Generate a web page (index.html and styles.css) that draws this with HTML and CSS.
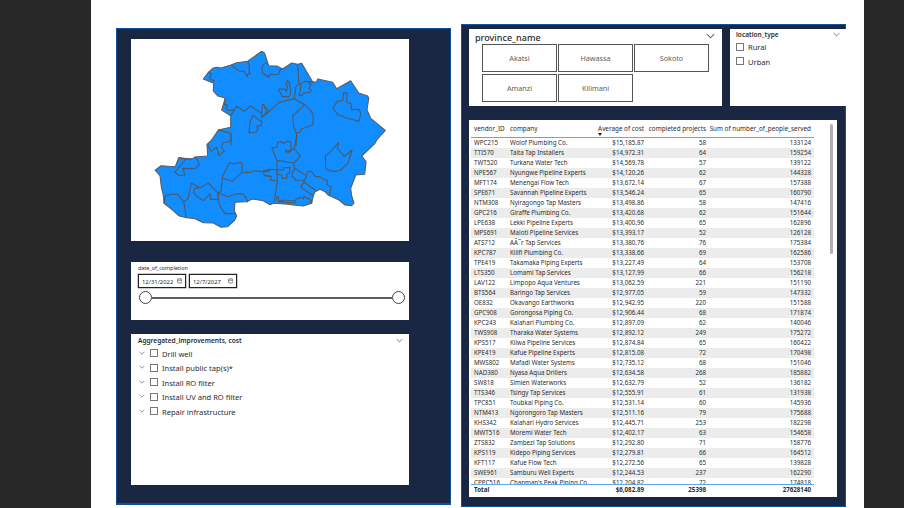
FILE: index.html
```html
<!DOCTYPE html>
<html lang="en">
<head>
<meta charset="utf-8">
<title>Water project dashboard</title>
<link rel="stylesheet" href="styles.css">
</head>
<body>
<main class="page">
  <section class="panel panel-left">
    <div class="card map-card">
      <svg class="map" viewBox="131 39 278 202">
        <path class="land" d="M203.3 79L209 71.7 213.3 68 217 67.3 221 68 231 65 236.7 62.7 247.7 61.3 261.7 51.3 264.5 53 268.7 65.7 276.7 66 282.7 69 291.7 63 297.7 64.3 301.7 63.3 312.7 82 316.7 81.7 317.7 79 332.7 82.3 336.7 88.7 350.7 80.7 358.7 93 367.7 96 368.7 98.3 367 110 370.7 118.3 385.3 130.3 376.7 140 375 143.3 361.7 156 366 161.7 364.7 174.3 355.7 175 350.7 188.3 351.7 196 354 203 351.7 205.7 345 205 339 200 328.3 195 325 191.7 320 189.3 315 191.7 313.3 195.7 311.7 203.3 303.3 206 293.3 205 285 204 273.3 203.3 270 204.7 263.3 200.7 252.3 199 246.7 201.7 235 202.3 234.3 211 236.7 216 234.3 220.7 227.7 226.7 221 227.3 213.3 223 203.3 222.7 195 218.7 186.7 217.7 179.3 216 171.7 209.3 164 203.3 163.3 195 161.3 186.7 160 175.7 155.3 170.3 161 165.7 175.3 166.7 178.7 157.7 192.3 159 195 157 207.7 156 207 144.3 211.7 140 218.3 130 230.7 127.3 230.7 115.7 221.7 110 225.3 98 217.7 96 213.3 91 213.7 83.3Z"/>
        <g class="border" transform="translate(145 40) scale(.33333)">
          <path d="M192 97l7 5-2 8-4 2 4 7 11 2-6 6"/>
          <path d="M258 75l25 18 15 2 8 15 2-7 8-2-5-10 3-12-6-15"/>
          <path d="M368 68l-12 4-5 12 1 15 18 11 5-3"/>
          <path d="M241 174l-2 22 4-3 5 5-6 8 8 6 17-3"/>
          <path d="M257 227l18-28 22 15 20-16 33 22 0 13 25-20M350 220l2-26 5 0 3 12 5 2-2 12"/>
          <path d="M323 226l28 20-3 11-13 2 4 8-6 9-21 3 3-30z"/>
          <path d="M220 270l38 10 0 35"/>
        </g>
        <g class="border" transform="translate(265 40) scale(.33333)">
          <path d="M-5 101l6 4 10 6 5-9 15 3 13-4 0-10 9-4"/>
          <path d="M98 73l4 60-9 6-5 36M-5 226l35-27 10-11 48-12 31 18-36 34 3 30 7 20 11-1 7-11 32-11 2-28-6-13-20-21M95 278l-2 40"/>
          <path d="M66 121l8 8 3 32-5 9-20 0-11-22 18-1 5 8 4-19-5-3z"/>
          <path d="M143 126l-22-2-16 8 3 10-6 25 9 0 5-8 18-2 6-5-9-8 8-10-9-6 15-3"/>
          <path d="M236 158l10 1-1 27 13 5 1 18 24-1 4 14-5 22-36-10-28-10-14-20 13-21 16-1z"/>
          <path d="M-1 202l7 3-1 15"/>
        </g>
        <g class="border" transform="translate(145 135) scale(.33333)">
          <path d="M188 28l10 21 3-2 14-10 7 25 16-14-9-12 5-13 15-2 9-6-1-18"/>
          <path d="M142 72l-19 0-34 40 13 9 18-1-7-20 37 1 14-12-12-23M101 68l23 5"/>
          <path d="M57 205l5-23 20-5 18 2 16 22 8 47M116 201l13-10 10-47 26 14 25-14 30 32 8-8 5-45 21-40 15 4 17-5 6 5-1 25-29 27-32-11M295 112l21 0 12-5 16 3 31-5"/>
          <path d="M165 158l-16 2-3 13 9 11 21 13 19-21 2 17 23 0 0-20 27 12 25-8 20-1 12 13 3 13"/>
          <path d="M220 193l5 20 15 23 32 0"/>
          <path d="M218 172l3 22M375 109l-20 2 3 10 17 3"/>
        </g>
        <g class="border" transform="translate(265 135) scale(.33333)">
          <path d="M35 75l-14-36 16-3 1-14 12-2 5 6 12-8 10 4 1 22-8 5-9-4 3 6 8 1 12-10 3-3 19 25-19 20-51-8 1 65-10 60M88 38l8-38M86 84l2 15 33 21"/>
          <path d="M-5 106l10 1 5-4 27 1 18 1 1-7 19 0-2 17-8 4 0 11-13 0-2-10-14-2-1-9M0 121l19 4-3 10 20 3"/>
          <path d="M88 100l-2 10-5 2 0 14 8 3 2 7 28-1M107 157l16-30 4-16 11-3 13 17 14 0 8 6 14 6-1 12 13 6-6 26M120 135l-13 22 39 26"/>
          <path d="M35 197l0-12 5 0 2 13 10-1 2 5 1-7 34 3 7-8 6 1 3-5 10 5 2-8 9 8 5-2 8 10-3 5M38 200l52 4 4-6M118 142l36 26"/>
          <path d="M221 23l-34 36-6 2 1 38 3 5 22 6 20-5 22-20 12-40-23 19-21-24z"/>
        </g>
      </svg>
    </div>
    <div class="card date-card">
      <div class="date-title">date_of_completion</div>
      <div class="dates">
        <div class="date"><span>12/31/2022</span><svg class="cal" viewBox="0 0 10 10"><rect x="1" y="1.5" width="8" height="7.5" rx="2"/><path d="M1 4h8"/></svg></div>
        <div class="date"><span>12/7/2027</span><svg class="cal" viewBox="0 0 10 10"><rect x="1" y="1.5" width="8" height="7.5" rx="2"/><path d="M1 4h8"/></svg></div>
      </div>
      <div class="slider"><i class="knob"></i><i class="track"></i><i class="knob"></i></div>
    </div>
    <div class="card improve-card">
      <div class="head"><b class="improve-title">Aggregated_improvements, cost</b><svg class="chev" viewBox="0 0 10 6"><path d="M1 1l4 4 4-4"/></svg></div>
      <div class="opts">
        <div class="opt"><svg class="chev small" viewBox="0 0 10 6"><path d="M1 1l4 4 4-4"/></svg><i class="box"></i><span>Drill well</span></div>
        <div class="opt"><svg class="chev small" viewBox="0 0 10 6"><path d="M1 1l4 4 4-4"/></svg><i class="box"></i><span>Install public tap(s)*</span></div>
        <div class="opt"><svg class="chev small" viewBox="0 0 10 6"><path d="M1 1l4 4 4-4"/></svg><i class="box"></i><span>Install RO filter</span></div>
        <div class="opt"><svg class="chev small" viewBox="0 0 10 6"><path d="M1 1l4 4 4-4"/></svg><i class="box"></i><span>Install UV and RO filter</span></div>
        <div class="opt"><svg class="chev small" viewBox="0 0 10 6"><path d="M1 1l4 4 4-4"/></svg><i class="box"></i><span>Repair infrastructure</span></div>
      </div>
    </div>
  </section>
  <section class="panel panel-right">
    <div class="filters">
      <div class="card province-card">
        <div class="head"><span class="province-title">province_name</span><svg class="chev big" viewBox="0 0 10 6"><path d="M1 1l4 4 4-4"/></svg></div>
        <div class="tiles"><div class="tile">Akatsi</div><div class="tile">Hawassa</div><div class="tile">Sokoto</div><div class="tile">Amanzi</div><div class="tile">Kilimani</div></div>
      </div>
      <div class="card location-card">
        <div class="head"><b class="location-title">location_type</b><svg class="chev" viewBox="0 0 10 6"><path d="M1 1l4 4 4-4"/></svg></div>
        <div class="opts">
          <div class="opt"><i class="box"></i><span>Rural</span></div>
          <div class="opt"><i class="box"></i><span>Urban</span></div>
        </div>
      </div>
    </div>
    <div class="card table-card">
      <div class="grid">
        <div class="row header"><span>vendor_ID</span><span>company</span><span class="sorted">Average of cost</span><span>completed projects</span><span>Sum of number_of_people_served</span></div>
        <div class="rows" id="rows"></div>
        <div class="row total"><span>Total</span><span></span><span>$6,082.89</span><span>25398</span><span>27628140</span></div>
      </div>
      <div class="scroll"></div>
    </div>
  </section>
</main>
<script src="table.js"></script>
</body>
</html>
```
FILE: styles.css
```css
* { box-sizing: border-box; }
body { margin: 0; width: 904px; height: 508px; overflow: hidden; background: #272727; font-family: "Noto Sans", sans-serif; color: #2d2c2b; }
.page { display: flex; align-items: flex-start; gap: 10px; width: 773px; height: 508px; margin-left: 91px; padding: 24px 18px 0 25px; background: #fff; }
.panel { background: #192743; border: 1px solid #0f5298; }
.panel-left { width: 335px; height: 477px; margin-top: 4px; padding: 10px 0 0 14px; border-bottom-width: 2px; }
.panel-right { width: 385px; height: 483px; padding: 4px 0 0 7px; }
.card { background: #fff; }
.map-card, .date-card, .improve-card { width: 278px; }
.map-card { height: 202px; }
.map { display: block; width: 278px; height: 202px; }
.land { fill: #118dff; stroke: #5a5d62; stroke-width: 1.1; stroke-linejoin: round; }
.border path { fill: none; stroke: #505a66; stroke-width: 3.4; stroke-linejoin: round; }
.date-card { height: 58px; margin-top: 21px; padding: 3px 4px 0 7px; }
.date-title { height: 8px; font-size: 5.4px; line-height: 7px; }
.dates { display: flex; gap: 3px; padding-top: 1px; }
.date { display: flex; align-items: center; justify-content: space-between; width: 48px; height: 14px; padding: 1px 3px 0 3px; border: 1px solid #222; box-shadow: 0 0 0 .5px #999; font-size: 5.9px; line-height: 10px; }
.cal { width: 5.5px; height: 5.5px; margin-bottom: 1px; fill: none; stroke: #666; stroke-width: 1.5; }
.slider { display: flex; align-items: center; margin: 3px 0 0 1px; }
.knob { width: 13px; height: 13px; border: 1px solid #444; border-radius: 50%; }
.track { flex: 1; height: 2px; background: #605e5c; }
.improve-card { height: 151px; margin-top: 14px; padding: 2px 6px 0 7px; }
.head { display: flex; align-items: flex-start; justify-content: space-between; }
.improve-title, .location-title { font-weight: 600; font-size: 6.55px; line-height: 9px; }
.chev { width: 7px; height: 5px; margin-top: 2px; fill: none; stroke: #666; stroke-width: 1.2; }
.chev.small { width: 6px; height: 4px; margin: 0 5px 2px 1px; }
.chev.big { width: 9px; height: 6px; margin-top: 1px; }
.improve-card .opts { padding-top: 1.5px; }
.opt { display: flex; align-items: center; height: 14.5px; font-size: 7.55px; line-height: 14px; }
.box { width: 8px; height: 8px; margin: 0 4px 1.5px 0; border: 1px solid #777; }
.filters { display: flex; gap: 8px; }
.province-card { flex: none; width: 253px; height: 77px; padding: 3px 7px 0 6px; }
.province-title { font-size: 9.05px; line-height: 12px; font-weight: 500; }
.tiles { display: grid; grid-template-columns: repeat(3, 75px); grid-auto-rows: 28px; gap: 2px 1px; padding-left: 7px; }
.tile { display: flex; align-items: center; justify-content: center; border: 1px solid #555; font-size: 7.2px; color: #605e5c; }
.location-card { flex: none; width: 116px; height: 77px; padding: 1px 6px 0 6px; }
.location-card .opts { padding-top: 1px; }
.table-card { display: flex; width: 368px; height: 377px; margin-top: 14px; padding: 3px 4px 0 2px; }
.grid { width: 343px; }
.row { display: grid; grid-template-columns: 36px 80px 54px 62px 105px; height: 10px; padding-left: 3px; font-size: 6.2px; line-height: 10.6px; white-space: nowrap; }
.row span:nth-child(n+3) { text-align: right; }
.header { height: 15px; font-size: 6.35px; line-height: 12px; border-bottom: 1px solid #62a8e8; }
.sorted { position: relative; }
.sorted::after { content: ""; position: absolute; left: 8px; top: 10px; border: 2px solid transparent; border-top: 3px solid #222; border-bottom: 0; }
.rows { height: 347px; overflow: hidden; border-bottom: 1px solid #62a8e8; }
.rows .row:nth-child(even) { background: #ececec; }
.total { font-weight: 700; }
.scroll { width: 3px; height: 130px; margin: 1px 0 0 16px; background: #b0b0b0; border-radius: 2px; }
```
FILE: table.js
```js
const data = `WPC215|Wolof Plumbing Co.|15,185.87|58|133124
TTI570|Taita Tap Installers|14,972.31|64|159254
TWT520|Turkana Water Tech|14,569.78|57|139122
NPE567|Nyungwe Pipeline Experts|14,120.26|62|144328
MFT174|Menengai Flow Tech|13,672.14|67|157388
SPE671|Savannah Pipeline Experts|13,546.24|65|160790
NTM308|Nyiragongo Tap Masters|13,498.86|58|147416
GPC216|Giraffe Plumbing Co.|13,420.68|62|151644
LPE638|Lekki Pipeline Experts|13,400.96|65|162896
MPS691|Maloti Pipeline Services|13,393.17|52|126128
ATS712|AÃ¯r Tap Services|13,380.76|76|175384
KPC787|Kilifi Plumbing Co.|13,338.66|69|162586
TPE419|Takamaka Piping Experts|13,227.49|64|153708
LTS350|Lomami Tap Services|13,127.99|66|156218
LAV122|Limpopo Aqua Ventures|13,062.59|221|151190
BTS564|Baringo Tap Services|12,977.05|59|147332
OE832|Okavango Earthworks|12,942.95|220|151588
GPC908|Gorongosa Piping Co.|12,906.44|68|171874
KPC243|Kalahari Plumbing Co.|12,897.09|62|140046
TWS908|Tharaka Water Systems|12,892.12|249|175272
KPS517|Kilwa Pipeline Services|12,874.84|65|160422
KPE419|Kafue Pipeline Experts|12,815.08|72|170498
MWS802|Mafadi Water Systems|12,735.12|68|151046
NAD380|Nyasa Aqua Drillers|12,634.58|268|185882
SW818|Simien Waterworks|12,632.79|52|136182
TTS346|Tsingy Tap Services|12,555.91|61|131938
TPC851|Toubkal Piping Co.|12,531.14|60|145936
NTM413|Ngorongoro Tap Masters|12,511.16|79|175688
KHS342|Kalahari Hydro Services|12,445.71|253|182298
MWT516|Moremi Water Tech|12,402.17|63|154658
ZTS832|Zambezi Tap Solutions|12,292.80|71|158776
KPS119|Kidepo Piping Services|12,279.81|66|164512
KFT117|Kafue Flow Tech|12,272.56|65|139828
SWE961|Samburu Well Experts|12,244.53|237|162290
CPPC516|Chapman's Peak Piping Co.|12,204.82|72|174818`;

const rows = document.getElementById("rows");
for (const line of data.split("\n")) {
  const cells = line.split("|");
  cells[2] = "$" + cells[2];
  const row = document.createElement("div");
  row.className = "row";
  for (const text of cells) {
    const cell = document.createElement("span");
    cell.textContent = text;
    row.append(cell);
  }
  rows.append(row);
}
```
